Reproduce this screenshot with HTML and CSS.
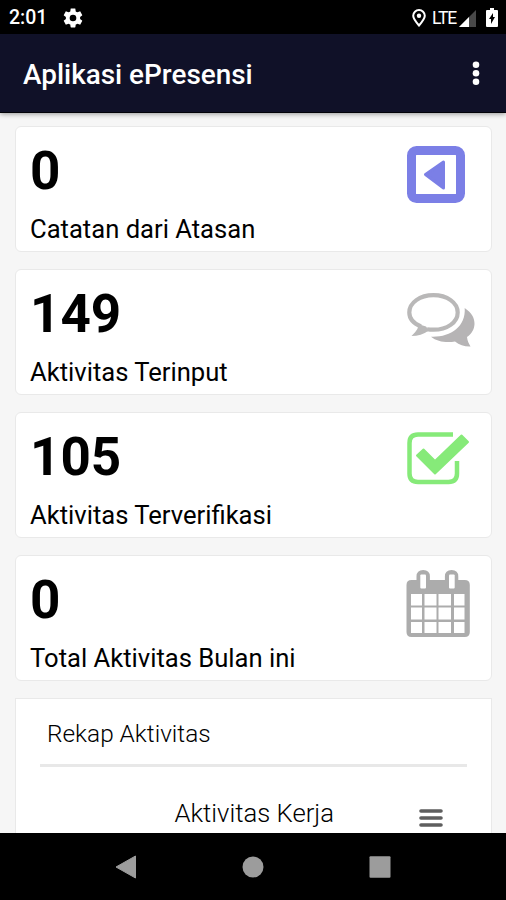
FILE: index.html
```html
<!DOCTYPE html>
<html lang="id">
<head>
    <meta charset="UTF-8">
    <meta name="viewport" content="width=device-width, initial-scale=1.0">
    <title>Aplikasi ePresensi</title>
    <link rel="stylesheet" href="styles.css">
</head>
<body>
    <div class="status-bar">
        <span class="clock">2:01</span>
        <svg class="gear" width="20" height="20" viewBox="1.500 1.500 21 21">
            <path fill="#fff" d="M19.43 12.98c.04-.32.07-.64.07-.98s-.03-.66-.07-.98l2.11-1.65c.19-.15.24-.42.12-.64l-2-3.46c-.12-.22-.39-.3-.61-.22l-2.49 1c-.52-.4-1.08-.73-1.69-.98l-.38-2.65C14.46 2.18 14.25 2 14 2h-4c-.25 0-.46.18-.49.42l-.38 2.65c-.61.25-1.17.59-1.69.98l-2.49-1c-.23-.09-.49 0-.61.22l-2 3.46c-.13.22-.07.49.12.64l2.11 1.65c-.04.32-.07.65-.07.98s.03.66.07.98l-2.11 1.65c-.19.15-.24.42-.12.64l2 3.46c.12.22.39.3.61.22l2.49-1c.52.4 1.08.73 1.69.98l.38 2.65c.03.24.24.42.49.42h4c.25 0 .46-.18.49-.42l.38-2.65c.61-.25 1.17-.59 1.69-.98l2.49 1c.23.09.49 0 .61-.22l2-3.46c.12-.22.07-.49-.12-.64zM12 15.500a3.500 3.500 0 1 1 0-7 3.500 3.500 0 0 1 0 7z"/>
        </svg>
        <div class="status-icons">
            <svg width="14" height="18" viewBox="0 0 14 18">
                <path fill="none" stroke="#fff" stroke-width="2" d="M7 16.500C3.500 12.500 1.200 9.500 1.200 6.800a5.800 5.800 0 0 1 11.600 0C12.800 9.500 10.500 12.500 7 16.500z"/>
                <circle cx="7" cy="6.800" r="2.200" fill="#fff"/>
            </svg>
            <span class="network">LTE</span>
            <svg class="signal" width="17" height="17" viewBox="0 0 17 17">
                <path fill="#484848" d="M17 0v17H0z"/>
                <path fill="#fff" d="M10 7v10H0z"/>
            </svg>
            <svg class="battery" width="12" height="19" viewBox="0 0 12 19">
                <path fill="#fff" d="M4 0h4v2h3q1 0 1 1v15q0 1-1 1H1q-1 0-1-1V3q0-1 1-1h3z"/>
                <path fill="#000" d="M7 5v4h2l-4 7v-5H3z"/>
            </svg>
        </div>
    </div>

    <header class="app-bar">
        <h1>Aplikasi ePresensi</h1>
        <svg width="8" height="26" viewBox="0 0 8 26">
            <g fill="#fff">
                <circle cx="4" cy="4.800" r="3.300"/>
                <circle cx="4" cy="13.300" r="3.300"/>
                <circle cx="4" cy="21.800" r="3.300"/>
            </g>
        </svg>
    </header>

    <main class="content">
        <div class="card">
            <div>
                <div class="number">0</div>
                <div class="label">Catatan dari Atasan</div>
            </div>
            <svg class="icon" width="70" height="70" viewBox="0 0 70 70">
                <rect x="5.500" y="9.500" width="49" height="48" rx="5" fill="none" stroke="#7b7fe6" stroke-width="9"/>
                <path fill="#7b7fe6" stroke="#7b7fe6" stroke-width="3" stroke-linejoin="round" d="M19.500 33.500L37.500 21v26z"/>
            </svg>
        </div>

        <div class="card">
            <div>
                <div class="number">149</div>
                <div class="label">Aktivitas Terinput</div>
            </div>
            <svg class="icon" width="70" height="70" viewBox="0 0 70 70">
                <path fill="none" stroke="#b9b8b8" stroke-width="4.200" d="M15 42.500C7.500 39.500 3.300 34.500 3.300 28.500 3.300 18.500 14 11.200 27.500 11.200S51.700 18.500 51.700 28.500 41 45.700 27.500 45.700q-3.500 0-6.500-.5"/>
                <path fill="#b9b8b8" d="M12 40q2 4-6.500 12Q15 52 23 46.500l-3-4z"/>
                <path fill="#b6b4b5" d="M58.700 24C66 29 68.700 34.500 68.500 40c-.2 5-2.500 9.500-7.500 13 .5 4 1.500 6 3.500 9.500-6 .2-11-1.500-15.500-5-8.500 1.500-18 .2-24-4.800C44 53.500 60 43 58.700 24z"/>
            </svg>
        </div>

        <div class="card">
            <div>
                <div class="number">105</div>
                <div class="label">Aktivitas Terverifikasi</div>
            </div>
            <svg class="icon" width="70" height="70" viewBox="0 0 70 70">
                <path fill="none" stroke="#86ea79" stroke-width="4.500" d="M47 7.500H12Q3.500 7.500 3.500 16v30.500q0 8.500 8.500 8.500h30.500q8.500 0 8.500-8.500V34"/>
                <path fill="#86ea79" stroke="#86ea79" stroke-width="2" stroke-linejoin="round" d="M11 28.500l6.500-6 11.500 11.500L55.500 8.500l6.500 6.500L29 46.500z"/>
            </svg>
        </div>

        <div class="card">
            <div>
                <div class="number">0</div>
                <div class="label">Total Aktivitas Bulan ini</div>
            </div>
            <svg class="icon" width="70" height="70" viewBox="0 0 70 70">
                <path fill="#acacac" d="M5.500 10h5V6.500q0-6.500 6.700-6.500t6.700 6.500v3.500h15V6.500q0-6.500 6.700-6.500t6.700 6.500v3.500h6.500q5 0 5 5v47q0 5-5 5H5.500q-5 0-5-5V15q0-5 5-5z"/>
                <g fill="#fff">
                    <rect x="14.300" y="4.500" width="5.700" height="14" rx="1"/>
                    <rect x="43" y="4.500" width="5.700" height="14" rx="1"/>
                    <path d="M5 24h11v11.500H5zM18.500 24h12v11.500h-12zM32.500 24h12.500v11.500H32.500zM48 24h10.500v11.500H48z"/>
                    <path d="M5 37.500h11v12H5zM18.500 37.500h12v12h-12zM32.500 37.500h12.500v12H32.500zM48 37.500h10.500v12H48z"/>
                    <path d="M5 52h11v11H5zM18.500 52h12v11h-12zM32.500 52h12.500v11H32.500zM48 52h10.500v11H48z"/>
                </g>
            </svg>
        </div>

        <section class="recap">
            <h2>Rekap Aktivitas</h2>
            <div class="chart-head">
                <span class="chart-title">Aktivitas Kerja</span>
                <svg class="menu" width="24" height="20" viewBox="0 0 24 20">
                    <path stroke="#5e5e5e" stroke-width="3.600" stroke-linecap="round" d="M2 3h20M2 10h20M2 17h20"/>
                </svg>
            </div>
        </section>
    </main>

    <nav class="nav-bar">
        <svg width="22" height="24" viewBox="0 0 22 24">
            <path fill="#9c9c9c" stroke="#9c9c9c" stroke-linejoin="round" d="M1 12L20.500 1v22z"/>
        </svg>
        <svg width="22" height="24" viewBox="0 0 22 24">
            <circle cx="11" cy="12" r="10.500" fill="#9c9c9c"/>
        </svg>
        <svg width="22" height="24" viewBox="0 0 22 24">
            <rect x="0.500" y="1.300" width="21" height="21.500" rx="1" fill="#9c9c9c"/>
        </svg>
    </nav>
</body>
</html>
```
FILE: styles.css
```css
* {
    box-sizing: border-box;
}
body {
    margin: 0;
    height: 900px;
    display: flex;
    flex-direction: column;
    overflow: hidden;
    font-family: Roboto, "Liberation Sans", sans-serif;
    background-color: #f6f6f6;
    color: #000;
}
svg {
    display: block;
    flex-shrink: 0;
}
.status-bar {
    flex: 0 0 34px;
    display: flex;
    align-items: center;
    padding: 1px 8px 0 9px;
    background-color: #000;
    color: #fff;
}
.clock {
    font-size: 19.5px;
    font-weight: 500;
    width: 54px;
}
.status-icons {
    display: flex;
    align-items: center;
    margin-left: auto;
}
.network {
    font-size: 17.5px;
    margin-left: 6px;
    width: 23px;
    letter-spacing: -1.1px;
}
.signal {
    margin: 2px 10px 0 4px;
}
.app-bar {
    flex: 0 0 79px;
    display: flex;
    justify-content: space-between;
    align-items: center;
    padding: 0 26px 0 23px;
    background-color: #101128;
    border-bottom: 1px solid #020208;
    box-shadow: 0 1px 5px rgba(0, 0, 0, 0.4);
    color: #fff;
    position: relative;
}
h1 {
    margin: 3px 0 0;
    font-size: 27.9px;
    font-weight: 500;
}
.content {
    flex: 1;
    min-height: 0;
    overflow: hidden;
    padding: 12.5px 14px 0 15px;
}
.card {
    height: 126px;
    display: flex;
    justify-content: space-between;
    margin-bottom: 17px;
    padding: 14px 15px 0 14px;
    background-color: #fff;
    border: 1.5px solid #e9e9e9;
    border-radius: 6px;
}
.icon {
    margin-top: 0.5px;
}
.number {
    margin-top: -0.5px;
    font-size: 53px;
    font-weight: 700;
    line-height: 62px;
}
.label {
    margin-top: 12px;
    font-size: 25.6px;
    line-height: 30px;
    white-space: nowrap;
}
.recap {
    height: 400px;
    padding: 0 24px;
    background-color: #fff;
    border: 1.5px solid #e9e9e9;
}
h2 {
    margin: 0;
    height: 68px;
    padding: 20px 0 0 7px;
    border-bottom: 3px solid #e8e8e8;
    font-size: 24.4px;
    font-weight: 300;
    line-height: 30px;
}
.chart-head {
    display: flex;
    align-items: center;
    justify-content: flex-end;
    padding: 31px 24px 0 0;
}
.chart-title {
    font-size: 25.7px;
    font-weight: 300;
    line-height: 30px;
    margin-right: 85px;
}
.menu {
    margin-top: 10px;
}
.nav-bar {
    flex: 0 0 67px;
    display: flex;
    justify-content: center;
    align-items: center;
    gap: 105px;
    background-color: #000;
}
```
